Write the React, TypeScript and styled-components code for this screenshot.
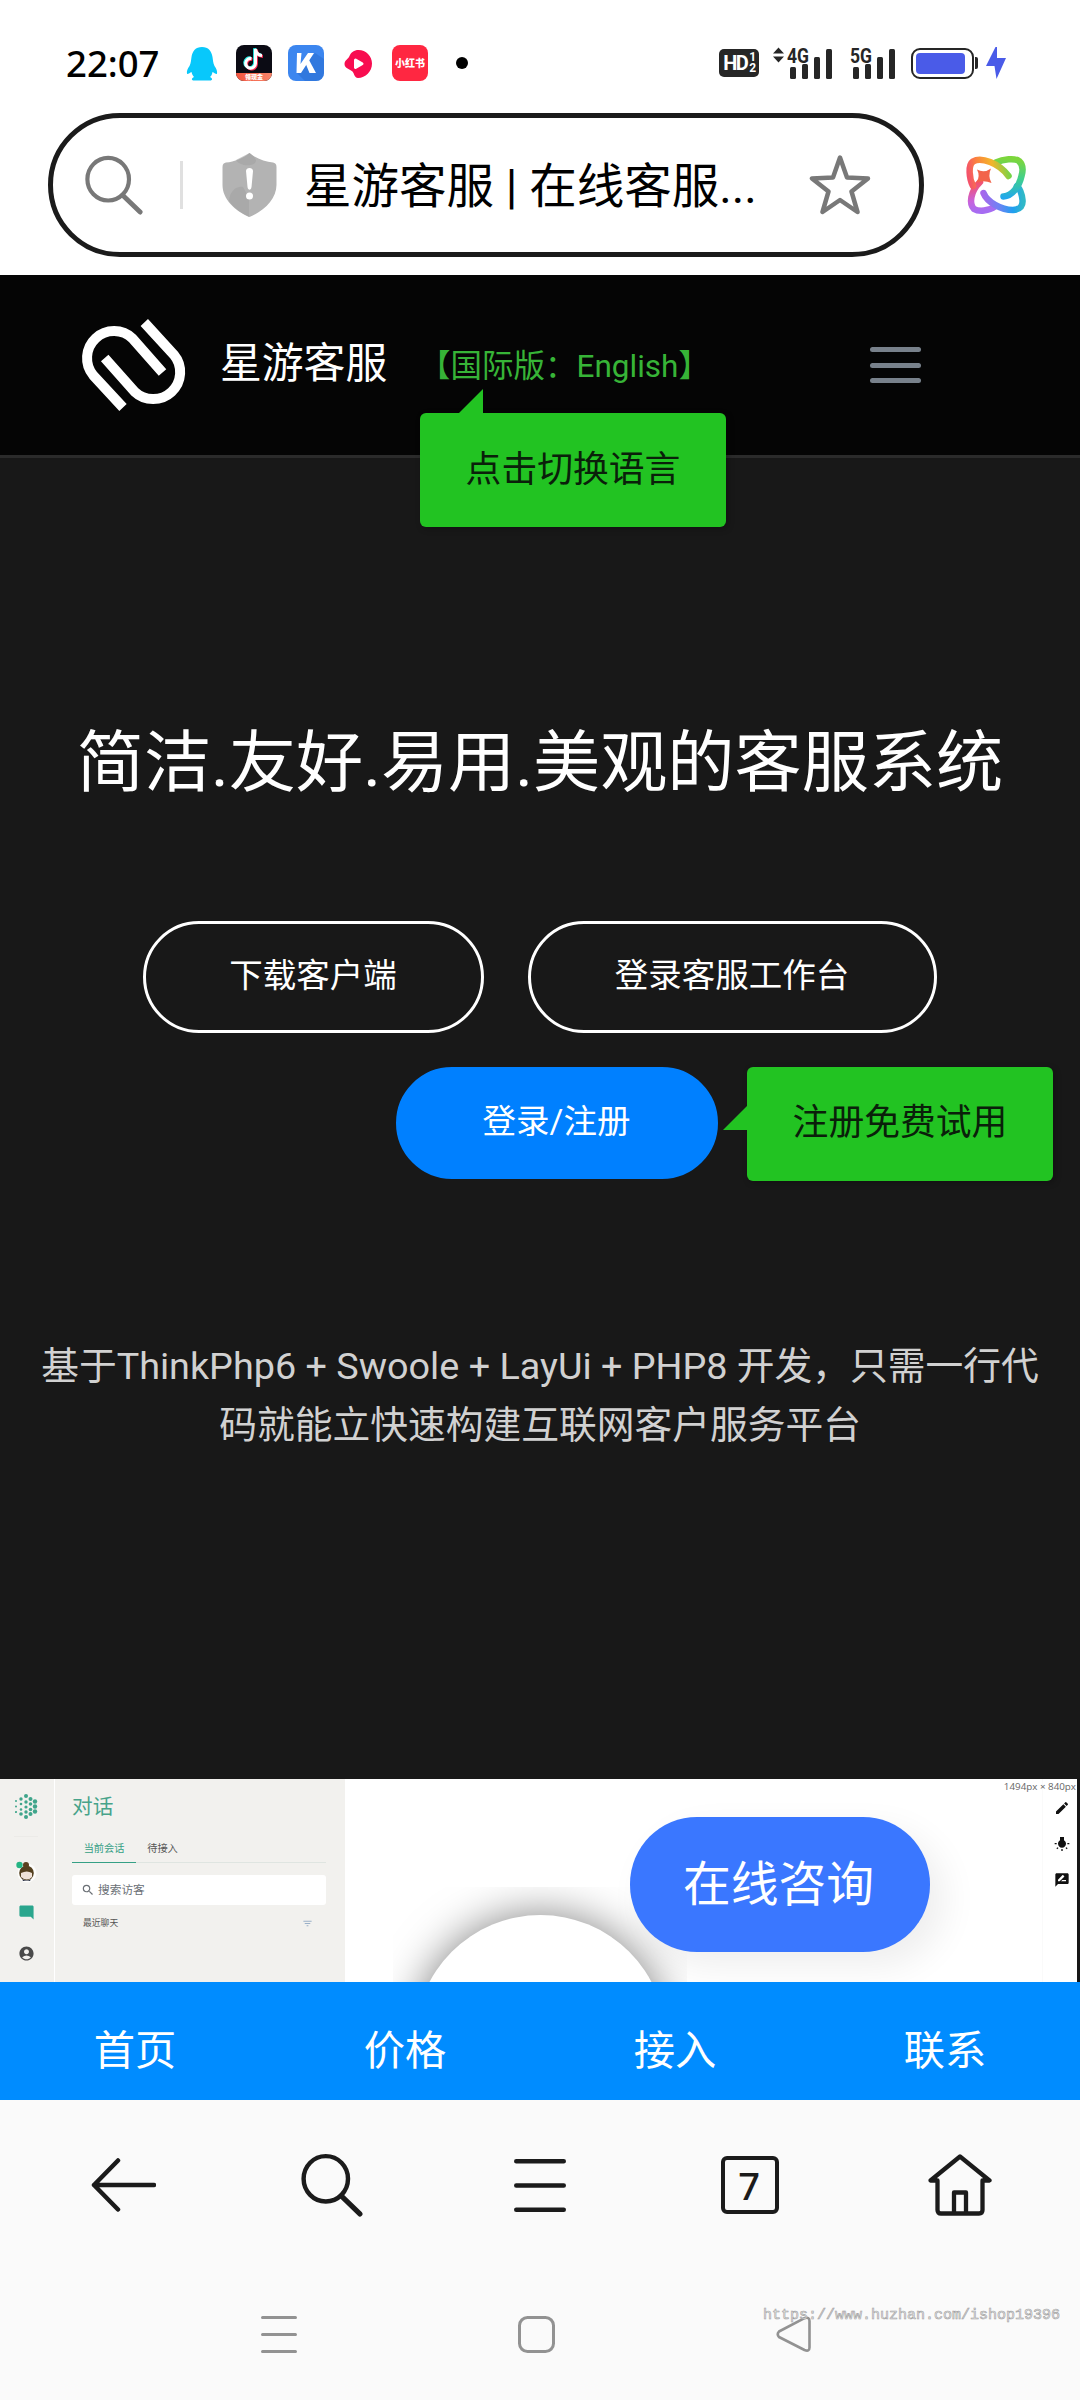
import React from 'react';
import styled, { createGlobalStyle } from 'styled-components';
import {
  MdEdit,
  MdWbIncandescent,
  MdRateReview,
  MdModeComment,
  MdAccountCircle,
  MdFilterList,
  MdSearch,
} from 'react-icons/md';

const Global = createGlobalStyle`
  * { box-sizing: border-box; }
  html, body { margin: 0; padding: 0; background: #fff; }
  body { font-family: Roboto, "Noto Sans CJK SC", sans-serif; font-weight: 400; }
  svg { display: block; flex: none; }
`;

const Screen = styled.div`
  width: 1080px;
  height: 2400px;
  display: flex;
  flex-direction: column;
  overflow: hidden;
  position: relative;
  background: #fff;
`;

/* ---------- status bar ---------- */

const StatusBar = styled.div`
  height: 113px;
  padding: 45px 74px 0 66px;
  display: flex;
  justify-content: space-between;
  align-items: flex-start;
`;

const StatusGroup = styled.div<{ $gap: number }>`
  display: flex;
  align-items: center;
  height: 36px;
  gap: ${(p) => p.$gap}px;
`;

const Clock = styled.span`
  font-family: "Noto Sans", sans-serif;
  font-weight: 500;
  font-size: 36.5px;
  line-height: 36px;
  width: 102px;
  color: #000;
`;

const AppTile = styled.div<{ $bg: string }>`
  width: 36px;
  height: 36px;
  border-radius: 8px;
  background: ${(p) => p.$bg};
  overflow: hidden;
  display: flex;
  flex-direction: column;
  align-items: center;
  justify-content: center;
  color: #fff;
  font-weight: 900;
  font-size: 10px;
  line-height: 12px;
  white-space: nowrap;
  font-family: "Noto Sans CJK SC", sans-serif;
`;

const TileRibbon = styled.div`
  width: 36px;
  height: 8px;
  background: linear-gradient(90deg, #f2553f, #f8866a);
  font-size: 6px;
  line-height: 8px;
  text-align: center;
`;

const MoreDot = styled.i`
  width: 12px;
  height: 12px;
  border-radius: 50%;
  background: #000;
  margin-left: 12px;
`;

const HdBadge = styled.div`
  width: 40px;
  height: 28px;
  border-radius: 5px;
  background: #262626;
  color: #fff;
  display: flex;
  align-items: center;
  justify-content: center;
  gap: 1px;
  font: 700 20px/28px Roboto, sans-serif;
  letter-spacing: -1.5px;
`;

const HdSims = styled.span`
  display: flex;
  flex-direction: column;
  font: 700 12px/11px Roboto, sans-serif;
  padding-left: 1px;
`;

const Signal = styled.div<{ $w: number }>`
  width: ${(p) => p.$w}px;
  height: 44px;
  margin-top: -12px;
`;

const Battery = styled.div`
  width: 63px;
  height: 31px;
  border: 2.5px solid #262626;
  border-radius: 9px;
  padding: 3px 7px 3px 2.5px;
`;

const BatteryLevel = styled.div`
  height: 100%;
  border-radius: 4px;
  background: #4a5be8;
`;

const BatteryNub = styled.i`
  width: 3px;
  height: 12px;
  border-radius: 0 2px 2px 0;
  background: #262626;
  margin: 0 8px 0 1px;
`;

/* ---------- address bar ---------- */

const AddressRow = styled.div`
  height: 162px;
  padding-left: 48px;
  display: flex;
  align-items: flex-start;
`;

const AddressBox = styled.div`
  width: 876px;
  height: 144px;
  border: 5px solid #1b1b1b;
  border-radius: 72px;
  display: flex;
  align-items: center;
  padding-left: 31px;
`;

const Divider = styled.i`
  width: 3px;
  height: 48px;
  background: #e0e0e0;
  margin: 0 39px 0 36px;
`;

const PageTitle = styled.span`
  font-size: 47.5px;
  line-height: 60px;
  color: #000;
  width: 505px;
  margin-left: 27px;
  padding-top: 4px;
  white-space: nowrap;
`;

const AssistantSlot = styled.div`
  margin: 32px 0 0 31px;
`;

/* ---------- site header ---------- */

const SiteHeader = styled.header`
  height: 183px;
  border-bottom: 3px solid #2b2b2b;
  background: #050505;
  display: flex;
  align-items: center;
  padding-left: 75px;
  position: relative;
`;

const Brand = styled.span`
  font-size: 41.8px;
  line-height: 50px;
  color: #fff;
  margin-left: 27px;
  padding-bottom: 3px;
  width: 199px;
`;

const Language = styled.span`
  font-size: 31.5px;
  line-height: 40px;
  color: #37b437;
  width: 451px;
  padding-top: 3px;
  white-space: nowrap;
`;

const Burger = styled.div`
  width: 51px;
  height: 36px;
  display: flex;
  flex-direction: column;
  justify-content: space-between;
`;

const BurgerBar = styled.i`
  height: 5px;
  border-radius: 3px;
  background: #78818b;
`;

const Tip = styled.div`
  width: 306px;
  height: 114px;
  border-radius: 6px;
  background: #22c322;
  color: #0a200a;
  font-size: 35.8px;
  line-height: 115px;
  text-align: center;
  position: relative;
  box-shadow: 2px 2px 6px rgba(0, 0, 0, 0.25);
`;

const HeaderTip = styled(Tip)`
  position: absolute;
  left: 420px;
  top: 138px;
  z-index: 2;
  &::before {
    content: '';
    position: absolute;
    left: 39px;
    top: -24px;
    border-left: 24px solid transparent;
    border-bottom: 24px solid #22c322;
  }
`;

const SideTip = styled(Tip)`
  line-height: 113px;
  &::before {
    content: '';
    position: absolute;
    left: -24px;
    top: 39px;
    border-left: 24px solid transparent;
    border-bottom: 24px solid #22c322;
  }
`;

/* ---------- hero ---------- */

const Hero = styled.section`
  height: 1321px;
  background: #181818;
  padding-top: 265px;
  display: flex;
  flex-direction: column;
`;

const Headline = styled.h1`
  margin: 0;
  font-weight: 400;
  font-size: 67.2px;
  line-height: 80px;
  color: #fff;
  text-align: center;
  white-space: nowrap;
`;

const OutlineRow = styled.div`
  margin-top: 118px;
  display: flex;
  justify-content: center;
  gap: 44px;
`;

const SignupRow = styled.div`
  margin-top: 34px;
  padding-left: 396px;
  display: flex;
  gap: 29px;
`;

const PillButton = styled.button<{ $w: number; $filled?: boolean }>`
  width: ${(p) => p.$w}px;
  height: 112px;
  padding: 0 1px 2px 0;
  border-radius: 56px;
  border: 3px solid ${(p) => (p.$filled ? '#0080ff' : '#fff')};
  background: ${(p) => (p.$filled ? '#0080ff' : 'transparent')};
  color: #fff;
  font: 400 33.5px/40px Roboto, "Noto Sans CJK SC", sans-serif;
`;

const Intro = styled.p`
  margin: 156px 20px 0;
  font-size: 37.75px;
  line-height: 59px;
  text-align: center;
  color: #d1d1d1;
`;

/* ---------- product preview ---------- */

const Preview = styled.section`
  height: 203px;
  background: #fff;
  display: flex;
  position: relative;
  overflow: hidden;
`;

const Rail = styled.div`
  width: 55px;
  border-right: 1px solid #fff;
  background: #f2f1ee;
  display: flex;
  flex-direction: column;
  align-items: center;
  padding: 15px 2px 0 0;
`;

const RailRule = styled.i`
  width: 24px;
  height: 1px;
  background: #ecebe8;
  margin: 17px 0 24px;
`;

const RailItem = styled.div<{ $gap: number; $c: string }>`
  margin-top: ${(p) => p.$gap}px;
  color: ${(p) => p.$c};
`;

const Chats = styled.div`
  width: 290px;
  background: #f2f1ee;
  padding: 14px 19px 0 17px;
`;

const ChatsTitle = styled.div`
  font-size: 20.7px;
  line-height: 28px;
  color: #47a38a;
`;

const Tabs = styled.div`
  display: flex;
  margin-top: 13px;
  height: 29px;
  border-bottom: 1px solid #dfe5e1;
`;

const Tab = styled.div<{ $w: number; $active?: boolean }>`
  width: ${(p) => p.$w}px;
  height: 29px;
  text-align: center;
  font-size: 10.2px;
  line-height: 30px;
  color: ${(p) => (p.$active ? '#35a085' : '#555')};
  border-bottom: 1px solid ${(p) => (p.$active ? '#35a085' : 'transparent')};
`;

const SearchField = styled.div`
  margin-top: 12px;
  height: 30px;
  border-radius: 3px;
  background: #fff;
  display: flex;
  align-items: center;
  gap: 3px;
  padding-left: 9px;
  font-size: 11.7px;
  line-height: 30px;
  color: #6b7076;
`;

const RecentRow = styled.div`
  display: flex;
  align-items: center;
  justify-content: space-between;
  padding: 0 13px 0 11px;
  margin-top: 9px;
  font-size: 8.8px;
  line-height: 18px;
  color: #555;
`;

const FilterMark = styled.span`
  color: #9ab0c8;
`;

const Canvas = styled.div`
  flex: 1;
  display: flex;
  justify-content: flex-end;
`;

const HaloClip = styled.div`
  position: absolute;
  left: 393px;
  top: 108px;
  width: 294px;
  height: 95px;
  overflow: hidden;
`;

const Halo = styled.div`
  width: 251px;
  height: 251px;
  margin: 28px auto 0;
  border-radius: 50%;
  background: #fff;
  box-shadow: 0 0 44px rgba(0, 0, 0, 0.5);
`;

const ToolRail = styled.div`
  width: 38px;
  border-left: 1px solid #fafafa;
  border-right: 3px solid #171717;
  display: flex;
  flex-direction: column;
  align-items: center;
  padding: 21px 0 0 3px;
  color: #111;
  gap: 20px;
`;

const SizeNote = styled.span`
  position: absolute;
  right: 4px;
  top: 1px;
  font: 400 9.8px/13px "Open Sans", sans-serif;
  color: #666;
`;

const Consult = styled.button`
  position: absolute;
  left: 630px;
  top: 38px;
  width: 300px;
  height: 135px;
  border: 0;
  padding: 0 3px 0 0;
  border-radius: 67px;
  background: #3a77ff;
  color: #fff;
  font: 400 47.8px/60px Roboto, "Noto Sans CJK SC", sans-serif;
  box-shadow: 14px 14px 36px rgba(0, 0, 0, 0.07);
`;

/* ---------- bottom bars ---------- */

const SiteNav = styled.nav`
  height: 118px;
  background: #008cff;
  display: grid;
  grid-template-columns: repeat(4, 1fr);
  padding-top: 41px;
`;

const SiteNavItem = styled.a`
  text-align: center;
  color: #fff;
  font-size: 41.3px;
  line-height: 56px;
`;

const BrowserBar = styled.div`
  height: 170px;
  background: #fafafa;
  padding: 0 18px 0 19px;
  display: grid;
  grid-template-columns: repeat(5, 1fr);
  align-items: center;
  justify-items: center;
`;

const TabCount = styled.div`
  width: 58px;
  height: 58px;
  border: 4px solid #1b1b1b;
  border-radius: 6px;
  font: 500 38px/51px "Noto Sans", sans-serif;
  text-align: center;
  color: #1b1b1b;
  padding-right: 2px;
  margin-left: 2px;
`;

const HouseSlot = styled.div`
  margin-left: 5px;
`;

const SystemBar = styled.div`
  height: 130px;
  background: #fafafa;
  display: flex;
  gap: 221px;
  padding: 46px 0 0 261px;
`;

const Watermark = styled.span`
  position: absolute;
  left: 763px;
  top: 2305px;
  font: 400 15px/22px "Liberation Mono", monospace;
  color: #f0f0f0;
  -webkit-text-stroke: 0.6px #a0a0a0;
`;

/* ---------- drawings ---------- */

const Penguin = () => (
  <svg width="36" height="36" viewBox="0 0 36 36">
    <path
      fill="#08c8fb"
      d="M18 2C11.500 2 8.500 6 7.500 12C7 15 7 18 5.500 21C3.500 24 2.500 26 3 29C5 29 6 27.500 7.500 27C8 29 9 31 10 32C7.500 33 7 35.500 10 35.500H26C29 35.500 28.500 33 26 32C27.500 31 28 29 28.500 27C30 27.500 31 29 33 29C33.500 26 32.500 24 30.500 21C29 18 29 15 28.500 12C27.500 6 24.500 2 18 2Z"
    />
  </svg>
);

const Note = () => (
  <svg width="36" height="28" viewBox="0 0 36 28">
    {[
      ['#2af0ea', -0.9, -0.7],
      ['#fe2c55', 0.9, 0.8],
      ['#fff', 0, 0],
    ].map(([c, x, y]) => (
      <g key={String(c)} transform={`translate(${x} ${y})`} fill="none" stroke={String(c)} strokeWidth="3">
        <path d="M15.500 13.500A4.900 4.900 0 1 0 19.500 18.500V4C20 8 22 10.300 26 10.600" />
      </g>
    ))}
  </svg>
);

const Strokes = () => (
  <svg width="36" height="36" viewBox="0 0 36 36">
    <path fill="#2a6fd2" opacity=".6" d="M9 28L17 36H36V14L27 8Z" />
    <path fill="#fff" d="M9 8H13.500L12.500 19L20 8H26L13 28H8.500Z" />
    <path fill="#fff" d="M17 17L20.500 14L28 28H21.500Z" />
  </svg>
);

const Blob = () => (
  <svg width="36" height="36" viewBox="0 0 36 36">
    <path
      fill="#f80d50"
      d="M18.500 5C26 5 32 11 32 18.500C32 26.500 25.500 33 18 33C14.500 33 14.500 29 12.500 26.500C10 24 4.500 23.500 4.500 19C4.500 15 8.500 14 9.500 11C11 7.500 14 5 18.500 5Z"
    />
    <path fill="#fff" stroke="#fff" strokeWidth="3" strokeLinejoin="round" d="M15.500 15L22 18.800L15.500 22.500Z" />
  </svg>
);

const Bars = ({ label, x, arrows }: { label: string; x: number; arrows?: boolean }) => (
  <Signal $w={x + 46}>
    <svg width={x + 46} height="44" viewBox={`0 -12 ${x + 46} 44`}>
      {arrows && <path fill="#262626" d="M0 6.500L5.500 .5L11 6.500ZM0 9.500H11L5.500 15.500Z" />}
      <text x={x - 3} y="15.500" fontFamily="Roboto" fontWeight="700" fontSize="20.500" textLength="22" lengthAdjust="spacingAndGlyphs" fill="#262626">
        {label}
      </text>
      <g fill="#262626">
        <rect x={x} y="20" width="6" height="12" rx="1.500" />
        <rect x={x + 12} y="17" width="6" height="15" rx="1.500" />
        <rect x={x + 24} y="10" width="6" height="22" rx="1.500" />
        <rect x={x + 36} y="2" width="6" height="30" rx="1.500" />
      </g>
    </svg>
  </Signal>
);

const Bolt = () => (
  <svg width="20" height="32" viewBox="0 0 20 32">
    <path fill="#4a5be8" d="M9.500 0L0 19H8.500L10.500 32L20 11H11V0Z" />
  </svg>
);

const Magnifier = ({ color, size }: { color: string; size: number }) => (
  <svg width={size} height={size} viewBox="0 0 60 62" fill="none" stroke={color} strokeLinecap="round">
    <ellipse cx="24" cy="25" rx="21.500" ry="22" strokeWidth="4.300" />
    <path d="M39 41.500L57 59" strokeWidth="5" />
  </svg>
);

const Shield = () => (
  <svg width="55" height="64" viewBox="0 0 55 64">
    <path fill="#b3b3b3" d="M27.500 0C33 5 43 9 51 9.500C53 10 54.500 11 54.500 14V32C54.500 46 42 58 27.500 64C13 58 .5 46 .5 32V14C.5 11 2 10 4 9.500C12 9 22 5 27.500 0Z" />
    <path fill="#a2a2a2" d="M27.500 0C31 3 34 5 34 8C33 12 27 13 22 12C18 11 15 9 14 7ZM7 48C8 38 14 33 21 34L27 45V64C19 60 12 55 7 48Z" opacity=".6" />
    <path fill="#fff" d="M24 18C24 14 31 14 31 18L29.500 34C29 37.500 26 37.500 25.500 34Z" />
    <circle cx="27.500" cy="43" r="3.500" fill="#fff" />
  </svg>
);

const Star = () => (
  <svg width="62" height="62" viewBox="0 0 62 62">
    <path
      d="M31 3.500L38 23.500L59 24.500L42.500 37.500L48.500 58L31 46L13.500 58L19.500 37.500L3 24.500L24 23.500Z"
      fill="none"
      stroke="#787878"
      strokeWidth="4.500"
      strokeLinejoin="round"
    />
  </svg>
);

const Assistant = () => (
  <svg width="80" height="80" viewBox="0 0 80 80" fill="none" strokeWidth="6.500" strokeLinecap="round">
    <defs>
      <linearGradient id="as1" gradientUnits="userSpaceOnUse" x1="14" y1="36" x2="56" y2="28">
        <stop offset="0" stopColor="#f4526a" />
        <stop offset=".25" stopColor="#fb8040" />
        <stop offset=".6" stopColor="#f4b42a" />
        <stop offset="1" stopColor="#6fd648" />
      </linearGradient>
      <linearGradient id="as2" gradientUnits="userSpaceOnUse" x1="55" y1="14" x2="52" y2="53">
        <stop offset="0" stopColor="#7cd63c" />
        <stop offset=".5" stopColor="#3ecf90" />
        <stop offset="1" stopColor="#22a8ec" />
      </linearGradient>
      <linearGradient id="as3" gradientUnits="userSpaceOnUse" x1="28" y1="50" x2="68" y2="50">
        <stop offset="0" stopColor="#a667ec" />
        <stop offset=".4" stopColor="#6f82f4" />
        <stop offset=".75" stopColor="#1f9ff0" />
        <stop offset="1" stopColor="#30b8c8" />
      </linearGradient>
      <linearGradient id="as4" gradientUnits="userSpaceOnUse" x1="20" y1="38" x2="26" y2="66">
        <stop offset="0" stopColor="#f4526a" />
        <stop offset=".6" stopColor="#c862dc" />
        <stop offset="1" stopColor="#a66cf2" />
      </linearGradient>
    </defs>
    <path stroke="url(#as4)" d="M40 61.500C34 66 24 67 19 64C14 59 15 47 25 37" />
    <path stroke="url(#as3)" d="M28.500 48C32 57 46 65 58 65C66 64.500 68 60 67.500 55C67 50 65 44 62 41" />
    <path stroke="url(#as2)" d="M41 17.500C48 14 60 13 64 16C68.500 20 68 26 66.500 31C64 42 57 51 48.500 51.500" />
    <path stroke="url(#as1)" d="M18 41C14 33 13 20 18 16.500C26 11.500 44 18 53.500 31" />
    <path fill="#f2644a" d="M22 24.500Q29 28.500 36 23.500Q32.500 31 36.500 38Q29 35 21.500 37.500Q25.500 31 22 24.500Z" />
  </svg>
);

const BrandMark = () => (
  <svg width="118" height="100" viewBox="76 315 118 100" fill="none" stroke="#fff" strokeWidth="10">
    <path d="M124 407.500L94.300 375.400A27 27 0 0 1 133.700 338.600L163.500 372.500" />
    <path d="M145.300 322.500L174.900 354.800A27 27 0 0 1 135.500 391.600L105.700 358" />
  </svg>
);

const DotCube = () => {
  const dots: Array<[number, number, number]> = [
    [11, 2, 2], [6, 5, 1.7], [15.500, 5, 2], [1, 7, 1], [20, 7.500, 2.200], [11, 8, 1.7], [6, 10, 1.300], [15.500, 10, 1.800],
    [1, 12.500, 1], [20, 12.500, 2.200], [11, 13, 1.600], [6, 15.500, 1.300], [15.500, 15.500, 1.800], [1, 18, 1.100],
    [20, 17.500, 2.200], [11, 18, 1.700], [6, 20, 1.800], [15.500, 20, 2], [11, 23, 2],
  ];
  return (
    <svg width="23" height="25" viewBox="0 0 23 25" fill="#3fa58b">
      {dots.map(([cx, cy, r]) => (
        <circle key={`${cx}-${cy}`} cx={cx} cy={cy} r={r} />
      ))}
    </svg>
  );
};

const Avatar = () => (
  <svg width="22" height="22" viewBox="0 0 22 22">
    <circle cx="12" cy="12" r="9.500" fill="#fdfdfc" />
    <circle cx="11" cy="4" r="3" fill="#5a3f1d" />
    <circle cx="11.500" cy="12" r="7.300" fill="#54401f" />
    <path d="M6 12Q12 9 17 12V16Q12 21 6 16Z" fill="#f0e2d8" />
    <path d="M7 18Q12 21 16 18L15 20H8Z" fill="#33384a" />
    <circle cx="4.500" cy="4" r="3.200" fill="#25b584" />
  </svg>
);

const Back = () => (
  <svg width="66" height="54" viewBox="0 0 66 54" fill="none" stroke="#1b1b1b" strokeWidth="4.500" strokeLinecap="round" strokeLinejoin="round">
    <path d="M28 2.500L4 27L28 51.500M4 27H64" />
  </svg>
);

const Lines = ({ w, h, s, color }: { w: number; h: number; s: number; color: string }) => (
  <svg width={w} height={h} stroke={color} strokeWidth={s} strokeLinecap="round">
    <path d={`M${s / 2} ${s / 2}H${w - s / 2}M${s / 2} ${h / 2}H${w - s / 2}M${s / 2} ${h - s / 2}H${w - s / 2}`} />
  </svg>
);

const House = () => (
  <svg width="64" height="64" viewBox="0 0 64 64" fill="none" stroke="#1b1b1b" strokeWidth="4.300" strokeLinejoin="round">
    <path d="M9.500 27.500H2.500L32 3.500L61.500 27.500H54.500V57Q54.500 60.500 51 60.500H13Q9.500 60.500 9.500 57Z" />
    <path d="M26 60V39.500H38V60" />
  </svg>
);

const HomeSquare = () => (
  <svg width="37" height="37" viewBox="0 0 37 37" fill="none" stroke="#929292" strokeWidth="3">
    <rect x="1.500" y="1.500" width="34" height="34" rx="8" />
  </svg>
);

const BackTriangle = () => (
  <svg width="36" height="37" viewBox="0 0 36 37" fill="none" stroke="#929292" strokeWidth="2.600">
    <path d="M28.500 2.200Q33.500 .5 33.500 5V31.500Q33.500 36 28.500 34L3 21Q.5 18.300 3 15.500Z" strokeLinejoin="round" />
  </svg>
);

export default function App() {
  return (
    <>
      <Global />
      <Screen>
        <StatusBar>
          <StatusGroup $gap={16}>
            <Clock>22:07</Clock>
            <Penguin />
            <AppTile $bg="#0b0b14">
              <Note />
              <TileRibbon>领现金</TileRibbon>
            </AppTile>
            <AppTile $bg="#3c86ef">
              <Strokes />
            </AppTile>
            <Blob />
            <AppTile $bg="#ff2741">小红书</AppTile>
            <MoreDot />
          </StatusGroup>
          <StatusGroup $gap={0}>
            <HdBadge>
              HD
              <HdSims>
                <span>1</span>
                <span>2</span>
              </HdSims>
            </HdBadge>
            <StatusGroup $gap={14}>
              <i />
              <Bars label="4G" x={17} arrows />
              <Bars label="5G" x={3} />
            </StatusGroup>
            <StatusGroup $gap={12}>
              <i />
              <Battery>
                <BatteryLevel />
              </Battery>
            </StatusGroup>
            <BatteryNub />
            <Bolt />
          </StatusGroup>
        </StatusBar>

        <AddressRow>
          <AddressBox>
            <Magnifier color="#787878" size={60} />
            <Divider />
            <Shield />
            <PageTitle>星游客服 | 在线客服...</PageTitle>
            <Star />
          </AddressBox>
          <AssistantSlot>
            <Assistant />
          </AssistantSlot>
        </AddressRow>

        <SiteHeader>
          <BrandMark />
          <Brand>星游客服</Brand>
          <Language>【国际版：English】</Language>
          <Burger>
            <BurgerBar />
            <BurgerBar />
            <BurgerBar />
          </Burger>
          <HeaderTip>点击切换语言</HeaderTip>
        </SiteHeader>

        <Hero>
          <Headline>简洁.友好.易用.美观的客服系统</Headline>
          <OutlineRow>
            <PillButton $w={341}>下载客户端</PillButton>
            <PillButton $w={409}>登录客服工作台</PillButton>
          </OutlineRow>
          <SignupRow>
            <PillButton $w={322} $filled>
              登录/注册
            </PillButton>
            <SideTip>注册免费试用</SideTip>
          </SignupRow>
          <Intro>
            基于ThinkPhp6 + Swoole + LayUi + PHP8 开发，只需一行代
            <br />
            码就能立快速构建互联网客户服务平台
          </Intro>
        </Hero>

        <Preview>
          <Rail>
            <DotCube />
            <RailRule />
            <Avatar />
            <RailItem $gap={21} $c="#2aa68d">
              <MdModeComment size={17} />
            </RailItem>
            <RailItem $gap={24} $c="#4a4a4a">
              <MdAccountCircle size={17} />
            </RailItem>
          </Rail>
          <Chats>
            <ChatsTitle>对话</ChatsTitle>
            <Tabs>
              <Tab $w={64} $active>
                当前会话
              </Tab>
              <Tab $w={53}>待接入</Tab>
            </Tabs>
            <SearchField>
              <MdSearch size={14} />
              搜索访客
            </SearchField>
            <RecentRow>
              最近聊天
              <FilterMark>
                <MdFilterList size={11} />
              </FilterMark>
            </RecentRow>
          </Chats>
          <Canvas>
            <ToolRail>
              <MdEdit size={16} />
              <MdWbIncandescent size={16} />
              <MdRateReview size={16} />
            </ToolRail>
          </Canvas>
          <HaloClip>
            <Halo />
          </HaloClip>
          <SizeNote>1494px × 840px</SizeNote>
          <Consult>在线咨询</Consult>
        </Preview>

        <SiteNav>
          <SiteNavItem>首页</SiteNavItem>
          <SiteNavItem>价格</SiteNavItem>
          <SiteNavItem>接入</SiteNavItem>
          <SiteNavItem>联系</SiteNavItem>
        </SiteNav>

        <BrowserBar>
          <Back />
          <Magnifier color="#1b1b1b" size={64} />
          <Lines w={52} h={53} s={4.5} color="#1b1b1b" />
          <TabCount>7</TabCount>
          <HouseSlot>
            <House />
          </HouseSlot>
        </BrowserBar>

        <SystemBar>
          <Lines w={36} h={37} s={3} color="#929292" />
          <HomeSquare />
          <BackTriangle />
        </SystemBar>
        <Watermark>https://www.huzhan.com/ishop19396</Watermark>
      </Screen>
    </>
  );
}
